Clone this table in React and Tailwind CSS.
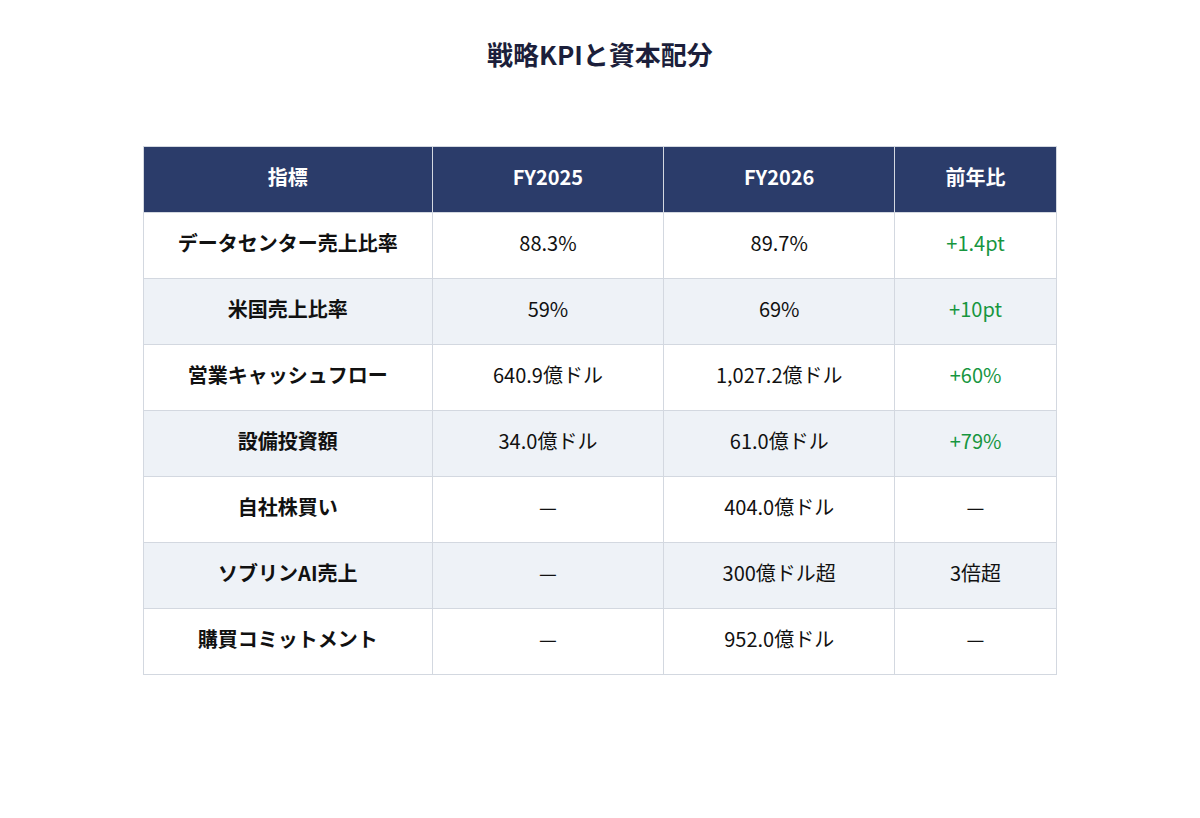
import React from 'react';

const rows = [
  { label: 'データセンター売上比率', a: '88.3%', b: '89.7%', c: '+1.4pt', up: true },
  { label: '米国売上比率', a: '59%', b: '69%', c: '+10pt', up: true },
  { label: '営業キャッシュフロー', a: '640.9億ドル', b: '1,027.2億ドル', c: '+60%', up: true },
  { label: '設備投資額', a: '34.0億ドル', b: '61.0億ドル', c: '+79%', up: true },
  { label: '自社株買い', a: '—', b: '404.0億ドル', c: '—' },
  { label: 'ソブリンAI売上', a: '—', b: '300億ドル超', c: '3倍超' },
  { label: '購買コミットメント', a: '—', b: '952.0億ドル', c: '—' },
];

const font = { fontFamily: '"Noto Sans CJK JP", "Noto Sans", sans-serif' };

export default function App() {
  return (
    <div className="min-h-[818px] w-full bg-white pt-[34px]" style={font}>
      <h1 className="text-center text-[26px] leading-[39px] font-bold text-[#1c1f3b]">戦略KPIと資本配分</h1>

      <div className="mx-auto mt-[73px] w-[914px]">
        <table className="w-full border-collapse text-[20px] leading-[30px]">
          <colgroup>
            <col className="w-[289px]" />
            <col className="w-[232px]" />
            <col className="w-[231px]" />
            <col className="w-[162px]" />
          </colgroup>
          <thead>
            <tr className="h-[66px] bg-[#2b3c6a] text-white">
              {['指標', 'FY2025', 'FY2026', '前年比'].map(h => (
                <th key={h} className="border border-[#d3d8e0] px-4 pb-[6px] text-center align-middle font-bold">{h}</th>
              ))}
            </tr>
          </thead>
          <tbody>
            {rows.map((r, i) => (
              <tr key={r.label} className={`h-[66px] ${i % 2 === 1 ? 'bg-[#eef2f7]' : 'bg-white'}`}>
                <td className="border border-[#d3d8e0] px-4 pb-[6px] text-center align-middle font-bold text-[#111111]">{r.label}</td>
                <td className="border border-[#d3d8e0] px-4 pb-[6px] text-center align-middle text-[#111111]">{r.a}</td>
                <td className="border border-[#d3d8e0] px-4 pb-[6px] text-center align-middle text-[#111111]">{r.b}</td>
                <td className={`border border-[#d3d8e0] px-4 pb-[6px] text-center align-middle ${r.up ? 'text-[#17963f]' : 'text-[#111111]'}`}>{r.c}</td>
              </tr>
            ))}
          </tbody>
        </table>
      </div>
    </div>
  );
}
